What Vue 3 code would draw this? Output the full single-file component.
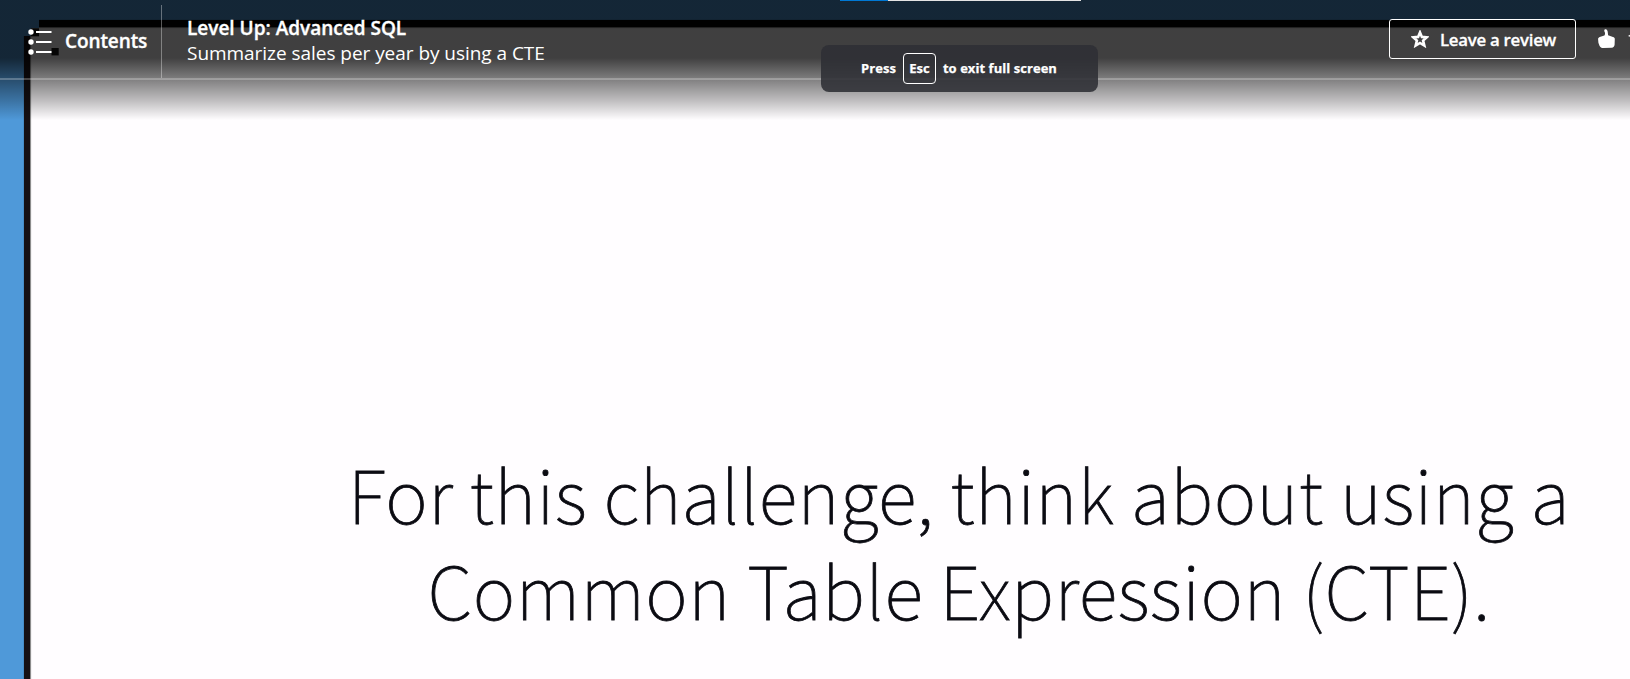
<script setup>
const rows = [32, 42, 52]
const lines = ['For this challenge, think about using a', 'Common Table Expression (CTE).']
</script>

<template>
  <main class="player">
    <section class="slide">
      <span class="corner"></span>
      <span class="corner-step"></span>
      <p v-for="line in lines" :key="line">{{ line }}</p>
    </section>
    <div class="shade"></div>

    <header class="topbar">
      <button class="contents">
        <svg class="list" width="35" height="30" viewBox="26 28 35 30">
          <rect x="31" y="28.3" width="8" height="8" fill="#050505" />
          <rect x="51.5" y="48" width="7.2" height="7.4" fill="#050505" />
          <g v-for="y in rows" :key="y" fill="#fff">
            <circle cx="31" :cy="y" r="2.7" />
            <rect x="36" :y="y - 1" width="15.5" height="2" />
          </g>
        </svg>
        <span>Contents</span>
      </button>
      <div class="titles">
        <h1>Level Up: Advanced SQL</h1>
        <h2>Summarize sales per year by using a CTE</h2>
      </div>
      <button class="review">
        <svg width="18" height="18" viewBox="0 0 18 18">
          <path d="M9 2.4 L10.9 6.9 L15.8 7.3 L12.1 10.6 L13.3 15.5 L9 12.9 L4.7 15.5 L5.9 10.6 L2.2 7.3 L7.1 6.9 Z" fill="none" stroke="#fff" stroke-width="2.6" />
        </svg>
        <span>Leave a review</span>
      </button>
      <svg class="thumb" width="17" height="19" viewBox="0 0 17 19">
        <path d="M6.3 0.9 C6.5 0.2 7.1 0 7.8 0.2 C8.9 0.5 9.6 1.5 9.7 2.8 L10.1 6.2 L15 8.1 C16.1 8.5 16.8 8.9 16.8 10 L16.6 15.8 C16.5 17.4 15.4 18.6 13.7 18.8 L5.4 19 C3.4 19 2.3 18.3 1.5 16.7 L0.4 13.8 L0.1 10.2 C0 9.2 0.6 8.3 1.7 7.9 L6.4 6.4 C7.4 5.4 7.2 3.6 6.3 2.2 Z" fill="#fff" />
      </svg>
      <svg class="next" width="3" height="4" viewBox="0 0 3 4">
        <path d="M0 2 L3 0 V3 Z" fill="#fff" />
      </svg>
    </header>

    <div class="progress"><span></span></div>
    <div class="toast">
      <span>Press</span><kbd>Esc</kbd><span>to exit full screen</span>
    </div>
  </main>
</template>

<style scoped>
.player {
  position: relative;
  width: 1630px;
  height: 679px;
  overflow: hidden;
  background: #4f99d9;
  font-family: "Open Sans", "Noto Sans", sans-serif;
  color: #fff;
}
.slide {
  position: relative;
  box-sizing: border-box;
  width: 1606px;
  height: 659px;
  margin: 20px 0 0 24px;
  padding-top: 418px;
  border-left: 6px solid #150f13;
  border-top: 7px solid #020204;
  box-shadow: 0 0 1px #234666, inset 1px 1px 1px #808080;
  background: #fffdff;
  float: left;
}
.slide p {
  margin: 0;
  width: 1858px;
  text-align: center;
  font: 100 72.4px/96px "Noto Sans CJK SC", sans-serif;
  letter-spacing: 0.5px;
  white-space: nowrap;
  color: #0b0b12;
  -webkit-text-stroke: 0.8px #0b0b12;
}
.corner, .corner-step {
  position: absolute;
  background: #4f99d9;
}
.corner { left: -7px; top: -8px; width: 16px; height: 9px; }
.corner-step { left: -7px; top: 0; width: 8px; height: 9px; }
.shade {
  position: absolute;
  inset: 0 0 auto;
  height: 120px;
  background: linear-gradient(rgba(0, 0, 0, .75) 58px, rgba(0, 0, 0, .5) 79px, rgba(0, 0, 0, .26) 100px, rgba(0, 0, 0, 0) 120px);
}
.topbar {
  position: absolute;
  inset: 0 0 auto;
  box-sizing: border-box;
  height: 80px;
  display: flex;
  align-items: flex-start;
  border-bottom: 2px solid rgba(255, 255, 255, .25);
}
button {
  font: inherit;
  color: inherit;
  background: none;
  border: 0;
  padding: 0;
}
.contents {
  box-sizing: border-box;
  width: 162px;
  height: 73px;
  margin-top: 5px;
  padding: 23px 0 0 26px;
  display: flex;
  align-items: flex-start;
  border-right: 1px solid rgba(255, 255, 255, .35);
  font-size: 19px;
  font-weight: 600;
  line-height: 28px;
  letter-spacing: -0.1px;
  -webkit-text-stroke: 0.35px #fff;
}
.contents span { margin: -1px 0 0 4px; }
.titles { margin: 16px 0 0 25px; width: 400px; }
h1, h2 {
  margin: 0;
  font-size: 19px;
  line-height: 25px;
  font-weight: 600;
}
h1 { -webkit-text-stroke: 0.35px #fff; }
h2 { font-weight: 400; letter-spacing: -0.04px; }
.review {
  box-sizing: border-box;
  width: 187px;
  height: 40px;
  margin: 19px 0 0 auto;
  padding-left: 21px;
  display: flex;
  align-items: center;
  border: 1px solid #fff;
  border-radius: 3px;
  font-size: 16.8px;
  font-weight: 600;
  letter-spacing: -0.25px;
  -webkit-text-stroke: 0.3px #fff;
}
.review span { margin-left: 11px; }
.thumb { margin: 29px 13px 0 22px; }
.next { margin-top: 34px; margin-right: -1px; }
.progress {
  position: absolute;
  left: 840px;
  top: 0;
  width: 241px;
  height: 1px;
  background: #e4e4e4;
}
.progress span { display: block; width: 48px; height: 1px; background: #0078d4; }
.toast {
  position: absolute;
  left: 821px;
  top: 45px;
  width: 277px;
  height: 47px;
  box-sizing: border-box;
  padding-left: 40px;
  display: flex;
  align-items: center;
  border-radius: 8px;
  background: rgba(46, 47, 52, .88);
  font-size: 13px;
  font-weight: 700;
  -webkit-text-stroke: 0.25px #fff;
}
.toast span { margin-top: -2px; letter-spacing: 0.05px; }
kbd {
  box-sizing: border-box;
  width: 33px;
  height: 31px;
  margin: 0 7px;
  border: 1px solid #fff;
  border-radius: 4px;
  font: inherit;
  line-height: 28px;
  text-align: center;
}
</style>
